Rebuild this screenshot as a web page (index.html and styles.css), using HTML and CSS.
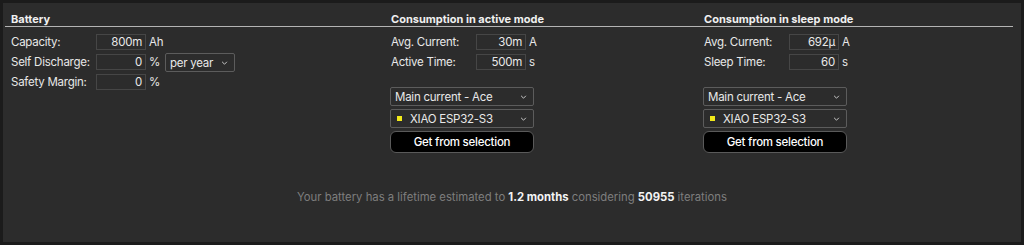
FILE: index.html
```html
<!DOCTYPE html>
<html>
<head>
<meta charset="utf-8">
<link rel="stylesheet" href="styles.css">
</head>
<body>
<div class="panel">
  <div class="heads">
    <div class="head">Battery</div>
    <div class="head">Consumption in active mode</div>
    <div class="head">Consumption in sleep mode</div>
  </div>
  <div class="cols">
    <div class="col">
      <div class="row"><span class="label">Capacity:</span><span class="input">800m</span><span class="unit">Ah</span></div>
      <div class="row"><span class="label">Self Discharge:</span><span class="input">0</span><span class="unit wide">%</span>
        <span class="select small">per year<svg class="chev" viewBox="0 0 8 5"><path d="M1 1 L4 4 L7 1" /></svg></span></div>
      <div class="row"><span class="label">Safety Margin:</span><span class="input">0</span><span class="unit">%</span></div>
    </div>
    <div class="col">
      <div class="row"><span class="label">Avg. Current:</span><span class="input">30m</span><span class="unit">A</span></div>
      <div class="row"><span class="label">Active Time:</span><span class="input">500m</span><span class="unit">s</span></div>
      <div class="controls">
        <span class="select">Main current - Ace<svg class="chev" viewBox="0 0 8 5"><path d="M1 1 L4 4 L7 1" /></svg></span>
        <span class="select"><span class="dot"></span>XIAO ESP32-S3<svg class="chev" viewBox="0 0 8 5"><path d="M1 1 L4 4 L7 1" /></svg></span>
        <span class="button">Get from selection</span>
      </div>
    </div>
    <div class="col">
      <div class="row"><span class="label">Avg. Current:</span><span class="input">692µ</span><span class="unit">A</span></div>
      <div class="row"><span class="label">Sleep Time:</span><span class="input">60</span><span class="unit">s</span></div>
      <div class="controls">
        <span class="select">Main current - Ace<svg class="chev" viewBox="0 0 8 5"><path d="M1 1 L4 4 L7 1" /></svg></span>
        <span class="select"><span class="dot"></span>XIAO ESP32-S3<svg class="chev" viewBox="0 0 8 5"><path d="M1 1 L4 4 L7 1" /></svg></span>
        <span class="button">Get from selection</span>
      </div>
    </div>
  </div>
  <div class="footer">Your battery has a lifetime estimated to <b>1.2 months</b> considering <b>50955</b> iterations</div>
</div>
</body>
</html>
```
FILE: styles.css
```css
html, body {
  margin: 0;
  padding: 0;
  background: #1b1b1b;
}
body {
  font-family: Inter, "Liberation Sans", sans-serif;
  color: #e8e8e8;
  font-size: 11.5px;
  letter-spacing: -0.25px;
  padding: 3px;
  height: 245px;
  box-sizing: border-box;
}
.panel {
  background: #2c2c2c;
  height: 239px;
  box-sizing: border-box;
  padding: 9px 8px 0 2px;
}
.heads, .cols {
  display: grid;
  grid-template-columns: 380px 313px 1fr;
}
.heads {
  border-bottom: 1px solid #b4b4b4;
  height: 14px;
}
.head {
  font-weight: 700;
  font-size: 11px;
  letter-spacing: 0;
  line-height: 14px;
  padding-left: 6px;
  color: #f0f0f0;
  white-space: nowrap;
}
.cols {
  padding-top: 7px;
}
.col {
  padding-left: 6px;
  display: flex;
  flex-direction: column;
  gap: 4px;
}
.row {
  display: flex;
  align-items: center;
  height: 16px;
  white-space: nowrap;
}
.label {
  width: 85px;
  flex: none;
}
.input {
  width: 50px;
  height: 16px;
  box-sizing: border-box;
  border: 1px solid #464646;
  text-align: right;
  padding-right: 3px;
  line-height: 14px;
  flex: none;
}
.unit {
  margin-left: 3px;
}
.unit.wide {
  width: 16px;
  flex: none;
}
.select {
  position: relative;
  display: flex;
  align-items: center;
  height: 19px;
  box-sizing: border-box;
  border: 1px solid #5c5c5c;
  border-radius: 2px;
  padding-left: 4px;
  width: 144px;
  white-space: nowrap;
}
.select.small {
  width: 70px;
  margin: -1px 0 -2px 0;
}
.chev {
  position: absolute;
  right: 6px;
  top: 7px;
  width: 7px;
  height: 4px;
  fill: none;
  stroke: #cfcfcf;
  stroke-width: 1.2;
}
.controls {
  margin-top: 13px;
  margin-left: -1px;
  display: flex;
  flex-direction: column;
  gap: 3px;
}
.dot {
  width: 5px;
  height: 5px;
  background: #f2ea1a;
  margin: 0 8px 0 2px;
}
.button {
  height: 22px;
  width: 144px;
  box-sizing: border-box;
  background: #000;
  border: 1px solid #5a5a5a;
  border-radius: 6px;
  display: flex;
  align-items: center;
  justify-content: center;
  font-weight: 500;
  color: #fff;
}
.footer {
  margin-top: 37px;
  text-align: center;
  font-size: 11.3px;
  letter-spacing: 0;
  color: #7e7e7e;
  padding-left: 6px;
}
.footer b {
  color: #f4f4f4;
  font-weight: 700;
}
```
